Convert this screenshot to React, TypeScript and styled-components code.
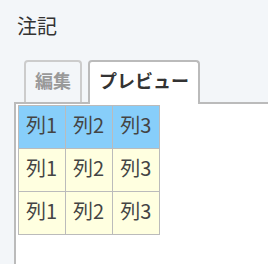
import React from "react";
import styled, { createGlobalStyle } from "styled-components";

const Global = createGlobalStyle`
  html, body {
    margin: 0;
    padding: 0;
    background: #f3f6f9;
    overflow: hidden;
    font-family: "Noto Sans CJK JP", "Noto Sans", sans-serif;
  }
`;

const Page = styled.div`
  width: 268px;
  height: 264px;
  overflow: hidden;
`;

const Title = styled.h2`
  margin: 0;
  padding: 11px 0 0 17px;
  font-size: 20px;
  font-weight: normal;
  line-height: 29px;
  color: #333;
`;

const Tabs = styled.div`
  display: flex;
  align-items: flex-start;
  gap: 6px;
  margin: 20px 0 -2px 24px;
`;

const Tab = styled.div<{ $active?: boolean }>`
  position: relative;
  z-index: ${(p) => (p.$active ? 1 : 0)};
  box-sizing: border-box;
  height: ${(p) => (p.$active ? 44 : 42)}px;
  padding: 5px 9px 0;
  border: 2px solid ${(p) => (p.$active ? "#bbb" : "#ccc")};
  border-bottom: none;
  border-radius: 4px 4px 0 0;
  background: ${(p) => (p.$active ? "#fff" : "#f3f6f9")};
  color: ${(p) => (p.$active ? "#333" : "#999")};
  font-size: 18px;
  font-weight: bold;
  line-height: 26px;
  white-space: nowrap;
`;

const Panel = styled.div`
  margin-left: 14px;
  width: 400px;
  height: 300px;
  border: 2px solid #bbb;
  background: #fff;
  padding: 1px 0 0 2px;
`;

const Table = styled.table`
  border-collapse: collapse;
  border: 1px solid #bbb;
`;

const Cell = styled.td<{ $head?: boolean }>`
  border: 1px solid #bbb;
  background: ${(p) => (p.$head ? "#87cefa" : "#ffffe0")};
  color: #444;
  font-size: 20px;
  line-height: 29px;
  width: 31px;
  padding: 4px 8px 9px 7px;
  white-space: nowrap;
`;

const rows = [true, false, false];
const cols = ["列1", "列2", "列3"];

export default function App() {
  return (
    <Page>
      <Global />
      <Title>注記</Title>
      <Tabs>
        <Tab>編集</Tab>
        <Tab $active>プレビュー</Tab>
      </Tabs>
      <Panel>
        <Table>
          <tbody>
            {rows.map((head, i) => (
              <tr key={i}>
                {cols.map((c) => (
                  <Cell key={c} $head={head}>
                    {c}
                  </Cell>
                ))}
              </tr>
            ))}
          </tbody>
        </Table>
      </Panel>
    </Page>
  );
}
